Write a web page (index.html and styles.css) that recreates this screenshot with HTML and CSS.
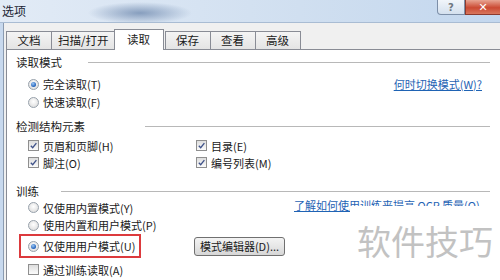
FILE: index.html
```html
<!DOCTYPE html>
<html lang="zh-CN">
<head>
  <meta charset="UTF-8">
  <title>选项</title>
  <link rel="stylesheet" href="styles.css">
</head>
<body>
  <div class="window">
    <div class="titlebar">
      <span class="title">选项</span>
      <div class="caption-btns">
        <span class="btn-help">?</span>
        <span class="btn-close">✕</span>
      </div>
    </div>

    <div class="client">
      <div class="tabs">
        <span class="tab">文档</span>
        <span class="tab">扫描/打开</span>
        <span class="tab active">读取</span>
        <span class="tab">保存</span>
        <span class="tab">查看</span>
        <span class="tab">高级</span>
      </div>

      <div class="panel">
        <!-- 读取模式 -->
        <div class="group-title"><span>读取模式</span><i class="rule rule-read"></i></div>
        <div class="option first">
          <span class="radio on"></span>完全读取(T)
          <a class="link link-mode" href="#">何时切换模式(W)?</a>
        </div>
        <div class="option"><span class="radio"></span>快速读取(F)</div>

        <!-- 检测结构元素 -->
        <div class="group-title spaced"><span>检测结构元素</span><i class="rule rule-detect"></i></div>
        <div class="checks">
          <div class="option"><span class="check"><svg viewBox="0 0 10 10"><path d="M2 5.2 L4.1 7.4 L8.2 2.4"/></svg></span>页眉和页脚(H)</div>
          <div class="option"><span class="check"><svg viewBox="0 0 10 10"><path d="M2 5.2 L4.1 7.4 L8.2 2.4"/></svg></span>目录(E)</div>
          <div class="option"><span class="check"><svg viewBox="0 0 10 10"><path d="M2 5.2 L4.1 7.4 L8.2 2.4"/></svg></span>脚注(O)</div>
          <div class="option"><span class="check"><svg viewBox="0 0 10 10"><path d="M2 5.2 L4.1 7.4 L8.2 2.4"/></svg></span>编号列表(M)</div>
        </div>

        <!-- 训练 -->
        <div class="group-title train-title"><span>训练</span><i class="rule rule-train"></i></div>
        <div class="option train-row">
          <span class="label"><span class="radio"></span>仅使用内置模式(Y)</span>
          <a class="link link-train" href="#">了解如何使用训练来提高 OCR 质量(Q)</a>
        </div>
        <div class="option"><span class="radio"></span>使用内置和用户模式(P)</div>
        <div class="picked-row">
          <div class="picked"><span class="radio on"></span>仅使用用户模式(U)</div>
          <button class="btn">模式编辑器(D)...</button>
        </div>
        <div class="option last"><span class="check"></span>通过训练读取(A)</div>
      </div>
    </div>

    <div class="watermark">软件技巧</div>
  </div>
</body>
</html>
```

FILE: styles.css
```css
body {
  margin: 0;
  font-family: "Noto Sans CJK SC", "Liberation Sans", sans-serif;
  color: #1a1a1a;
  overflow: hidden;
}

.window {
  position: relative;
  width: 500px;
  height: 280px;
  display: flex;
  flex-direction: column;
  background: #f0f0f0;
  overflow: hidden;
}

/* title bar */
.titlebar {
  height: 22px;
  display: flex;
  align-items: flex-start;
  background:
    radial-gradient(ellipse 52px 11px at 140px 13px, rgba(120, 145, 180, 0.85), rgba(120, 145, 180, 0)),
    linear-gradient(to right, #e2ebf6, #d0dff0 60%, #c3d7ee);
  border-bottom: 1px solid #a9bcd3;
}

.title {
  font-size: 12px;
  line-height: 22px;
  padding-left: 2px;
  color: #1b2433;
}

.caption-btns {
  margin-left: auto;
  display: flex;
}

.btn-help, .btn-close {
  height: 14px;
  display: flex;
  align-items: center;
  justify-content: center;
  font-family: "DejaVu Sans", sans-serif;
  font-weight: bold;
  font-size: 10px;
}

.btn-help {
  width: 26px;
  border: 1px solid #7d8fa8;
  border-top: none;
  border-radius: 0 0 0 4px;
  background: linear-gradient(#f1f5fa, #d4e0ee);
  color: #6f7780;
}

.btn-close {
  width: 34px;
  border: 1px solid #8c3a2e;
  border-top: none;
  border-right: none;
  background: linear-gradient(#e8a593, #cb4a33 55%, #d8765c);
  color: #fff;
  font-size: 11px;
}

/* client area */
.client {
  flex: 1;
  display: flex;
  flex-direction: column;
  border-left: 3px solid #c8d9ee;
  box-shadow: inset 1px 0 0 #8b9bb0;
  padding-left: 3px;
}

.tabs {
  height: 20px;
  margin-top: 6px;
  display: flex;
  align-items: flex-end;
  font-size: 11.5px;
}

.tab {
  box-sizing: border-box;
  min-width: 46px;
  height: 18px;
  line-height: 17px;
  padding: 0 6px;
  text-align: center;
  border: 1px solid #898c95;
  border-bottom: none;
  margin-right: -1px;
  background: linear-gradient(#f4f4f4, #e4e4e4);
}

.tab.active {
  position: relative;
  z-index: 1;
  min-width: 50px;
  height: 21px;
  line-height: 18px;
  margin: 0 1px -1px -1px;
  background: #fff;
}

.panel {
  flex: 1;
  background: #fff;
  border-top: 1px solid #898c95;
  border-left: 1px solid #898c95;
  padding: 4px 10px 0 9px;
  font-size: 11px;
}

.group-title {
  display: flex;
  align-items: center;
  height: 16px;
  font-size: 11.5px;
}

.group-title.spaced {
  margin-top: 7px;
}

.group-title.train-title {
  margin-top: 12px;
}

.rule {
  flex: 1;
  border-top: 1px solid #b8b8b8;
}

.rule-read { margin-left: 26px; }
.rule-detect { margin-left: 60px; }
.rule-train { margin-left: 22px; }

.option {
  display: flex;
  align-items: center;
  height: 18px;
  padding-left: 12px;
  white-space: nowrap;
}

.option.first {
  margin-top: 5px;
}

.checks {
  display: grid;
  grid-template-columns: 180px auto;
  margin-top: 3px;
}

.checks .option {
  height: 17px;
}

.checks .option:nth-child(even) {
  padding-left: 0;
}

.train-row {
  height: 17px;
}

.train-row .label {
  display: flex;
  align-items: center;
  width: 266px;
}

.option.last {
  margin-top: 3px;
  height: 17px;
}

/* radio and check glyphs */
.radio {
  position: relative;
  width: 9px;
  height: 9px;
  margin-right: 4px;
  border: 1px solid #97a1ab;
  border-radius: 50%;
  background: radial-gradient(circle at 50% 40%, #ffffff, #d6d6d6);
  flex: none;
}

.radio.on::after {
  content: "";
  position: absolute;
  left: 2px;
  top: 2px;
  width: 5px;
  height: 5px;
  border-radius: 50%;
  background: radial-gradient(circle at 40% 35%, #9cc8f6, #1f5fb8 70%);
}

.check {
  width: 9px;
  height: 9px;
  margin-right: 4px;
  border: 1px solid #8f8f8f;
  background: linear-gradient(#dedede, #fbfbfb);
  flex: none;
}

.check svg {
  display: block;
  width: 9px;
  height: 9px;
  fill: none;
  stroke: #3f5289;
  stroke-width: 1.5;
}

.link {
  color: #1f63b4;
  text-decoration: underline;
}

.link-mode {
  margin-left: auto;
  margin-right: 8px;
}

.link-train {
  align-self: flex-start;
  line-height: 13px;
}

.picked-row {
  display: flex;
  align-items: center;
  padding-left: 3px;
}

.picked {
  display: flex;
  align-items: center;
  box-sizing: border-box;
  width: 122px;
  height: 24px;
  padding-left: 7px;
  border: 2px solid #dc3a3d;
  white-space: nowrap;
}

.btn {
  margin-left: 53px;
  width: 91px;
  height: 19px;
  padding: 0;
  border: 1px solid #707070;
  border-radius: 3px;
  background: linear-gradient(#f3f3f3, #e6e6e6 50%, #d6d6d6);
  font-family: inherit;
  font-size: 11px;
  color: #1a1a1a;
}

/* watermark overlay */
.watermark {
  position: absolute;
  left: 350px;
  top: 206px;
  right: 0;
  bottom: 0;
  background: #fff;
  padding: 17px 0 0 7px;
  font-size: 34px;
  line-height: 36px;
  color: #c2c2c2;
}
```
